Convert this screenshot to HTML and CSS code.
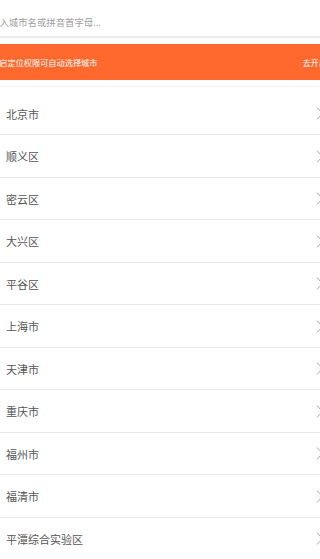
FILE: index.html
```html
<!DOCTYPE html>
<html lang="zh-CN">
<head>
<meta charset="utf-8">
<meta name="viewport" content="width=device-width, initial-scale=1">
<title>选择城市</title>
<link rel="stylesheet" href="styles.css">
</head>
<body>
<div class="page">
  <div class="search">
    <span class="placeholder">输入城市名或拼音首字母...</span>
  </div>
  <div class="banner">
    <span class="banner-text">开启定位权限可自动选择城市</span>
    <span class="banner-action">去开启</span>
  </div>
  <ul class="list">
    <li class="row"><span class="name">北京市</span><svg class="chev" viewBox="0 0 8 13" width="8" height="13"><path d="M1 0.5 L6.5 6.5 L1 12.5"/></svg></li>
    <li class="row"><span class="name">顺义区</span><svg class="chev" viewBox="0 0 8 13" width="8" height="13"><path d="M1 0.5 L6.5 6.5 L1 12.5"/></svg></li>
    <li class="row"><span class="name">密云区</span><svg class="chev" viewBox="0 0 8 13" width="8" height="13"><path d="M1 0.5 L6.5 6.5 L1 12.5"/></svg></li>
    <li class="row"><span class="name">大兴区</span><svg class="chev" viewBox="0 0 8 13" width="8" height="13"><path d="M1 0.5 L6.5 6.5 L1 12.5"/></svg></li>
    <li class="row"><span class="name">平谷区</span><svg class="chev" viewBox="0 0 8 13" width="8" height="13"><path d="M1 0.5 L6.5 6.5 L1 12.5"/></svg></li>
    <li class="row"><span class="name">上海市</span><svg class="chev" viewBox="0 0 8 13" width="8" height="13"><path d="M1 0.5 L6.5 6.5 L1 12.5"/></svg></li>
    <li class="row"><span class="name">天津市</span><svg class="chev" viewBox="0 0 8 13" width="8" height="13"><path d="M1 0.5 L6.5 6.5 L1 12.5"/></svg></li>
    <li class="row"><span class="name">重庆市</span><svg class="chev" viewBox="0 0 8 13" width="8" height="13"><path d="M1 0.5 L6.5 6.5 L1 12.5"/></svg></li>
    <li class="row"><span class="name">福州市</span><svg class="chev" viewBox="0 0 8 13" width="8" height="13"><path d="M1 0.5 L6.5 6.5 L1 12.5"/></svg></li>
    <li class="row"><span class="name">福清市</span><svg class="chev" viewBox="0 0 8 13" width="8" height="13"><path d="M1 0.5 L6.5 6.5 L1 12.5"/></svg></li>
    <li class="row"><span class="name">平潭综合实验区</span><svg class="chev" viewBox="0 0 8 13" width="8" height="13"><path d="M1 0.5 L6.5 6.5 L1 12.5"/></svg></li>
  </ul>
</div>
</body>
</html>
```

FILE: styles.css
```css
* {
  box-sizing: border-box;
}

html, body {
  margin: 0;
  padding: 0;
  background: #ffffff;
  overflow: hidden;
}

body {
  font-family: "Noto Sans CJK SC", "Noto Sans", sans-serif;
}

.page {
  width: 320px;
  overflow: hidden;
}

.search {
  height: 38px;
  display: flex;
  align-items: center;
  padding-top: 8px;
  border-bottom: 2px solid #ececec;
}

.placeholder {
  margin-left: -10px;
  font-size: 9.4px;
  color: #a0a0a0;
  white-space: nowrap;
}

.banner {
  margin-top: 6px;
  height: 36px;
  background: #ff692d;
  color: #ffffff;
  font-size: 8.2px;
  display: flex;
  align-items: center;
  justify-content: space-between;
  white-space: nowrap;
}

.banner-text {
  margin-left: -9px;
}

.banner-action {
  margin-right: -7px;
}

.list {
  list-style: none;
  margin: 6px 0 0;
  padding: 5.5px 0 0;
  border-top: 1px solid #efefef;
}

.row {
  height: 42.5px;
  display: flex;
  align-items: center;
  justify-content: space-between;
  padding: 1px 0 0 6px;
  border-bottom: 1px solid #e8e8e8;
}

.name {
  font-size: 11px;
  color: #555555;
  white-space: nowrap;
}

.chev {
  flex: none;
  margin-right: -4px;
}

.chev path {
  fill: none;
  stroke: #a8a8a8;
  stroke-width: 1;
}
```
